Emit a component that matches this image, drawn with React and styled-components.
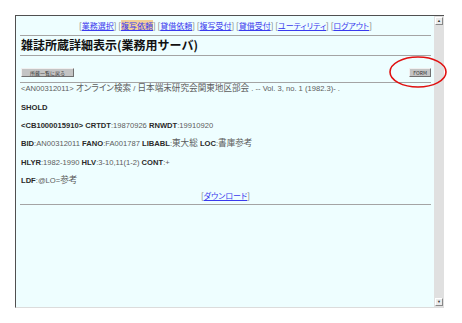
import React from "react";
import styled, { createGlobalStyle } from "styled-components";

const GlobalStyle = createGlobalStyle`
    body {
        margin: 0;
        background: #ffffff;
        font-family: "Liberation Sans", "Noto Sans CJK JP", sans-serif;
    }
`;

const Page = styled.div`
    position: relative;
    width: 462px;
    height: 323px;
    padding: 15px 0 0 15px;
    box-sizing: border-box;
`;

const Frame = styled.div`
    width: 429px;
    height: 293px;
    display: flex;
    border-top: 1px solid #505050;
    border-left: 1px solid #505050;
    border-bottom: 1px solid #dcdcdc;
    box-sizing: border-box;
`;

const Content = styled.div`
    flex: 1;
    background: #eefeff;
    padding: 0 3px 0 4px;
`;

const ScrollBar = styled.div`
    width: 10px;
    background: #e0e0e0;
    display: flex;
    flex-direction: column;
    justify-content: space-between;
    align-items: center;
    padding: 1px 0;
    box-sizing: border-box;
`;

const ArrowButton = styled.div`
    width: 6px;
    height: 6px;
    background: #ebebeb;
    border: 1px solid #888;
    border-top-color: #fff;
    border-left-color: #fff;
    font-size: 4px;
    line-height: 6px;
    text-align: center;
    color: #333;
`;

const Nav = styled.div`
    margin-top: 5px;
    height: 10px;
    line-height: 10px;
    font-size: 8px;
    text-align: center;
    color: #777;
    white-space: nowrap;
    font-family: "Noto Sans CJK JP", sans-serif;
    font-feature-settings: "palt";
`;

const NavLink = styled.a`
    color: #3a3aee;
    text-decoration: underline;
    background: ${(p) => (p.$current ? "#f2cf98" : "transparent")};
`;

const Rule = styled.div`
    margin-top: ${(p) => p.$gap}px;
    border-top: 1px solid #a4a4a4;
`;

const Title = styled.h1`
    margin: 2px 0 0 1px;
    font-size: 12px;
    line-height: 14px;
    font-weight: bold;
    color: #111;
    font-family: "Noto Sans CJK JP", sans-serif;
`;

const Toolbar = styled.div`
    margin: 12px 0 0 1px;
    display: flex;
    justify-content: space-between;
    align-items: center;
    height: 9px;
`;

const Button = styled.button`
    height: 9px;
    padding: 0 ${(p) => p.$pad}px;
    font-size: 5px;
    line-height: 7px;
    color: #333;
    background: #c4c4c4;
    border: 1px solid #707070;
    border-top-color: #f0f0f0;
    border-left-color: #f0f0f0;
    font-family: "Noto Sans CJK JP", sans-serif;
`;

const Line = styled.p`
    margin: ${(p) => p.$gap}px 0 0 1px;
    font-family: "Liberation Sans Narrow", "Liberation Sans", "Noto Sans CJK JP", sans-serif;
    font-feature-settings: "palt";
    font-size: 7.6px;
    line-height: 10px;
    color: #5c5c5c;
    white-space: nowrap;
`;

const Jp = styled.span`
    font-family: "Noto Sans CJK JP", sans-serif;
    font-size: 8.6px;
    line-height: 0;
`;

const Label = styled.b`
    color: #2a2a2a;
`;

const Center = styled.div`
    margin-top: 5px;
    font-size: 8px;
    line-height: 10px;
    text-align: center;
    color: #777;
    font-family: "Noto Sans CJK JP", sans-serif;
    font-feature-settings: "palt";
`;

const Mark = styled.svg`
    position: absolute;
    left: 388px;
    top: 55px;
`;

const navItems = ["業務選択", "複写依頼", "貸借依頼", "複写受付", "貸借受付", "ユーティリティ", "ログアウト"];

function App() {
    return (
        <Page>
            <GlobalStyle />
            <Frame>
                <Content>
                    <Nav>
                        {navItems.map((item, i) => (
                            <React.Fragment key={item}>
                                {i > 0 && " "}[<NavLink href="#" $current={item === "複写依頼"}>{item}</NavLink>]
                            </React.Fragment>
                        ))}
                    </Nav>
                    <Rule $gap={4} />
                    <Title>雑誌所蔵詳細表示(業務用サーバ)</Title>
                    <Rule $gap={3} />
                    <Toolbar>
                        <Button $pad={8}>所蔵一覧に戻る</Button>
                        <Button $pad={3}>FORM</Button>
                    </Toolbar>
                    <Rule $gap={5} />
                    <Line $gap={1}>
                        &lt;AN00312011&gt; <Jp>オンライン検索</Jp> / <Jp>日本端末研究会関東地区部会</Jp> . -- Vol. 3, no. 1 (1982.3)- .
                    </Line>
                    <Line $gap={9}><Label>SHOLD</Label></Line>
                    <Line $gap={8}>
                        <Label>&lt;CB1000015910&gt;</Label> <Label>CRTDT</Label>:19870926 <Label>RNWDT</Label>:19910920
                    </Line>
                    <Line $gap={8}>
                        <Label>BID</Label>:AN00312011 <Label>FANO</Label>:FA001787 <Label>LIBABL</Label>:<Jp>東大総</Jp> <Label>LOC</Label>:<Jp>書庫参考</Jp>
                    </Line>
                    <Line $gap={9}>
                        <Label>HLYR</Label>:1982-1990 <Label>HLV</Label>:3-10,11(1-2) <Label>CONT</Label>:+
                    </Line>
                    <Line $gap={8}>
                        <Label>LDF</Label>:@LO=<Jp>参考</Jp>
                    </Line>
                    <Center>
                        [<NavLink href="#">ダウンロード</NavLink>]
                    </Center>
                    <Rule $gap={3} />
                </Content>
                <ScrollBar>
                    <ArrowButton>▲</ArrowButton>
                    <ArrowButton>▼</ArrowButton>
                </ScrollBar>
            </Frame>
            <Mark width="60" height="34" viewBox="0 0 60 34">
                <ellipse cx="30" cy="17" rx="28" ry="15" fill="none" stroke="#e01010" strokeWidth="1.6" />
            </Mark>
        </Page>
    );
}

export default App;
